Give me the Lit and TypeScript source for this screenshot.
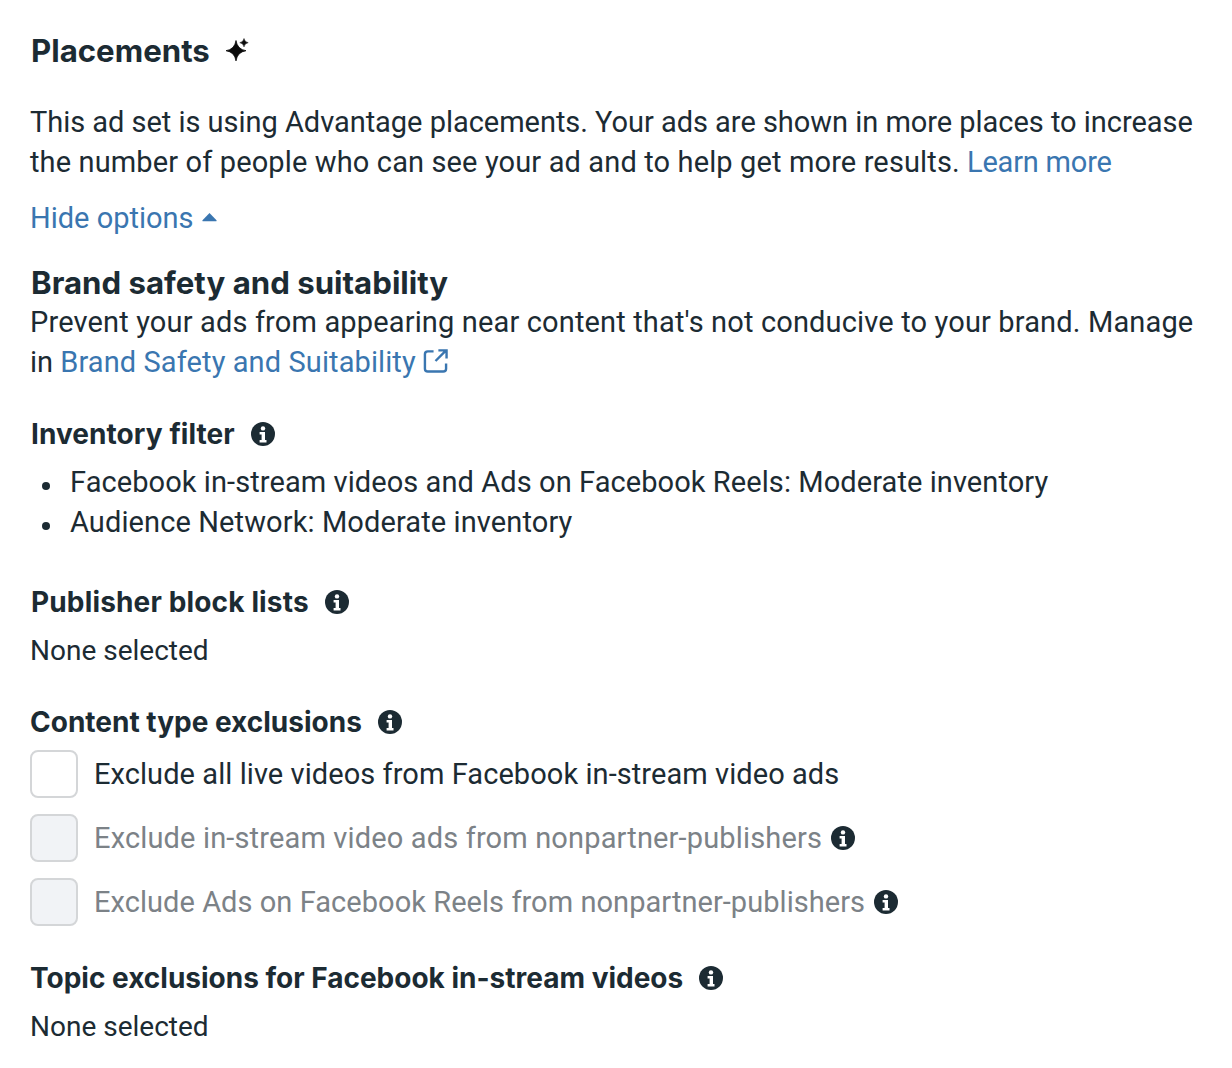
import { LitElement, html, css, svg } from 'lit';
import { customElement } from 'lit/decorators.js';

const infoIcon = html`<svg class="info" viewBox="0 0 24 24" aria-hidden="true">
  <circle cx="12" cy="12" r="12" fill="#1c2b33"></circle>
  <circle cx="12" cy="6.400" r="2.200" fill="#fff"></circle>
  <path d="M8.600 10h5.400v8h1.500v2.400H8.600V18h2v-5.600h-2z" fill="#fff"></path>
</svg>`;

const sparkle = svg`<path d="M11 2.500Q12.300 11.400 21 12.700 12.300 14 11 22.900 9.700 14 1 12.700 9.700 11.400 11 2.500z" fill="#0b0b0b" stroke="#0b0b0b" stroke-width=".8"></path>
  <path d="M19 .5Q19.600 4.100 23.200 4.700 19.600 5.300 19 8.900 18.400 5.300 14.800 4.700 18.400 4.100 19 .5z" fill="#0b0b0b" stroke="#0b0b0b" stroke-width=".5"></path>`;

@customElement('app-root')
export class AppRoot extends LitElement {
  static override styles = css`
    :host {
      display: block;
      width: 1232px;
      height: 1068px;
      background: #fff;
      color: #1c2b33;
      font-family: Roboto, sans-serif;
      font-size: 29px;
      line-height: 40px;
      overflow: hidden;
    }
    .page {
      display: flex;
      flex-direction: column;
      padding: 31px 30px 0 30px;
    }
    .title {
      display: flex;
      align-items: center;
      gap: 15px;
      font-family: Inter, sans-serif;
      font-weight: 700;
      font-size: 31.200px;
      line-height: 40px;
      margin: 0 0 31px 1px;
    }
    .sparkle {
      width: 24px;
      height: 24px;
      margin-top: -2px;
    }
    p {
      margin: 0;
    }
    a {
      color: #3a76b0;
      text-decoration: none;
    }
    .intro-1 { letter-spacing: -0.03px; }
    .intro-2 { letter-spacing: 0.13px; }
    .learn { letter-spacing: -0.2px; }
    .prevent { letter-spacing: 0.15px; }
    .manage { letter-spacing: 0.1px; }
    .toggle {
      display: flex;
      align-items: center;
      gap: 8px;
      margin-top: 16px;
    }
    .caret {
      width: 15px;
      height: 10px;
      margin-top: -3px;
    }
    .brand-title {
      font-family: Inter, sans-serif;
      font-weight: 700;
      font-size: 31.200px;
      line-height: 40px;
      margin: 25px 0 -1px 1px;
    }
    .external {
      width: 25px;
      height: 25px;
      vertical-align: -1px;
    }
    .label {
      display: flex;
      align-items: center;
      gap: 16px;
      font-family: Inter, sans-serif;
      font-weight: 700;
      font-size: 28px;
      line-height: 40px;
    }
    .info {
      width: 24px;
      height: 24px;
      flex: none;
    }
    .inventory {
      margin: 32px 0 0 1px;
      letter-spacing: 0.07px;
    }
    ul {
      list-style: none;
      margin: 8px 0 0;
      padding: 0;
    }
    li {
      display: flex;
      align-items: center;
      gap: 20px;
      padding-left: 12px;
    }
    li::before {
      content: '';
      width: 8px;
      height: 8px;
      margin-top: 7px;
      border-radius: 50%;
      background: #1c2b33;
      flex: none;
    }
    .bullet-1 { letter-spacing: 0.08px; }
    .bullet-2 { letter-spacing: 0.11px; }
    .publisher {
      margin: 40px 0 0 1px;
      letter-spacing: 0.15px;
    }
    .value {
      margin: 9px 0 -1px;
      font-size: 28px;
    }
    .content { margin-top: 32px; }
    .checks {
      display: flex;
      flex-direction: column;
      gap: 16px;
      margin-top: 8px;
    }
    .check {
      display: flex;
      align-items: center;
      gap: 16px;
    }
    .check .info { margin-left: -7px; }
    .box {
      width: 48px;
      height: 48px;
      box-sizing: border-box;
      border: 2px solid #d4d6d8;
      border-radius: 8px;
      background: #fff;
      flex: none;
    }
    .check.disabled { color: #7c8287; }
    .check.disabled .box { background: #f1f3f6; }
    .live { letter-spacing: 0.07px; }
    .partner { letter-spacing: 0.15px; }
    .reels { letter-spacing: 0.05px; }
    .topic { margin-top: 32px; }
  `;

  override render() {
    return html`
      <div class="page">
        <div class="title">
          <span>Placements</span>
          <svg class="sparkle" viewBox="0 0 24 24" aria-hidden="true">${sparkle}</svg>
        </div>
        <p><span class="intro-1">This ad set is using Advantage placements. Your ads are shown in more places to increase</span><br />
        <span class="intro-2">the number of people who can see your ad and to help get more results.</span> <a class="learn" href="#">Learn more</a></p>
        <a class="toggle" href="#">
          <span>Hide options</span>
          <svg class="caret" viewBox="0 0 15 10" aria-hidden="true"><path d="M7.500 1 14.500 8.200c.3.500 0 1-.6 1H1.100c-.6 0-.9-.5-.6-1z" fill="#3a76b0"></path></svg>
        </a>
        <div class="brand-title">Brand safety and suitability</div>
        <p><span class="prevent">Prevent your ads from appearing near content that's not conducive to your brand. Manage</span><br />
        in <a class="manage" href="#">Brand Safety and Suitability <svg class="external" viewBox="0 0 26 26" fill="none" stroke="#3a76b0" stroke-width="2.500" aria-hidden="true"><path d="M11 3.500H5A3 3 0 0 0 2 6.500v15a3 3 0 0 0 3 3h16a3 3 0 0 0 3-3V16"></path><path d="M16 2.500h8.500V11M24 2.500 13 13.500"></path></svg></a></p>
        <div class="label inventory"><span>Inventory filter</span>${infoIcon}</div>
        <ul>
          <li><span class="bullet-1">Facebook in-stream videos and Ads on Facebook Reels: Moderate inventory</span></li>
          <li><span class="bullet-2">Audience Network: Moderate inventory</span></li>
        </ul>
        <div class="label publisher"><span>Publisher block lists</span>${infoIcon}</div>
        <div class="value">None selected</div>
        <div class="label content"><span>Content type exclusions</span>${infoIcon}</div>
        <div class="checks">
          <div class="check"><span class="box"></span><span class="live">Exclude all live videos from Facebook in-stream video ads</span></div>
          <div class="check disabled"><span class="box"></span><span class="partner">Exclude in-stream video ads from nonpartner-publishers</span>${infoIcon}</div>
          <div class="check disabled"><span class="box"></span><span class="reels">Exclude Ads on Facebook Reels from nonpartner-publishers</span>${infoIcon}</div>
        </div>
        <div class="label topic"><span>Topic exclusions for Facebook in-stream videos</span>${infoIcon}</div>
        <div class="value">None selected</div>
      </div>
    `;
  }
}
